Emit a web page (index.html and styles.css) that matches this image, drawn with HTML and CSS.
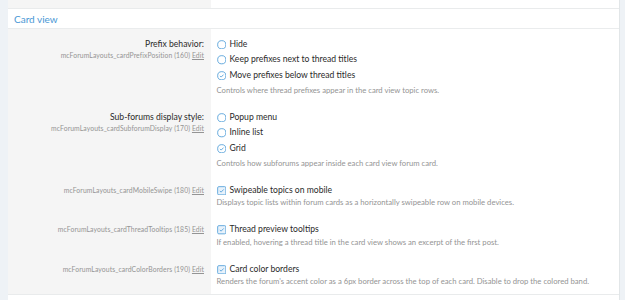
FILE: index.html
```html
<!DOCTYPE html>
<html lang="en">
<head>
  <meta charset="UTF-8" />
  <title>Options: Card view</title>
  <link rel="stylesheet" href="styles.css">
</head>
<body>

  <div class="block">

    <!-- tail of the previous group -->
    <div class="form-row prev-row">
      <div class="row-l"></div>
      <div class="row-r"></div>
    </div>

    <h3 class="block-head">Card view</h3>

    <!-- Prefix behavior -->
    <div class="form-row">
      <div class="row-l">
        <div class="label">Prefix behavior:</div>
        <div class="hint">mcForumLayouts_cardPrefixPosition (160) <span class="edit">Edit</span></div>
      </div>
      <div class="row-r">
        <ul class="choices">
          <li>
            <svg class="ico" viewBox="0 0 10 10"><circle cx="5" cy="5" r="4.3" fill="#fff" stroke="#4f9dd8" stroke-width="0.9"/></svg>
            Hide
          </li>
          <li>
            <svg class="ico" viewBox="0 0 10 10"><circle cx="5" cy="5" r="4.3" fill="#fff" stroke="#4f9dd8" stroke-width="0.9"/></svg>
            Keep prefixes next to thread titles
          </li>
          <li>
            <svg class="ico" viewBox="0 0 10 10"><circle cx="5" cy="5" r="4.3" fill="#fff" stroke="#4f9dd8" stroke-width="0.9"/><path d="M3.1 5.1 L4.4 6.4 L6.9 3.8" fill="none" stroke="#4f9dd8" stroke-width="0.9"/></svg>
            Move prefixes below thread titles
          </li>
        </ul>
        <div class="explain">Controls where thread prefixes appear in the card view topic rows.</div>
      </div>
    </div>

    <!-- Sub-forums display style -->
    <div class="form-row">
      <div class="row-l">
        <div class="label">Sub-forums display style:</div>
        <div class="hint">mcForumLayouts_cardSubforumDisplay (170) <span class="edit">Edit</span></div>
      </div>
      <div class="row-r">
        <ul class="choices">
          <li>
            <svg class="ico" viewBox="0 0 10 10"><circle cx="5" cy="5" r="4.3" fill="#fff" stroke="#4f9dd8" stroke-width="0.9"/></svg>
            Popup menu
          </li>
          <li>
            <svg class="ico" viewBox="0 0 10 10"><circle cx="5" cy="5" r="4.3" fill="#fff" stroke="#4f9dd8" stroke-width="0.9"/></svg>
            Inline list
          </li>
          <li>
            <svg class="ico" viewBox="0 0 10 10"><circle cx="5" cy="5" r="4.3" fill="#fff" stroke="#4f9dd8" stroke-width="0.9"/><path d="M3.1 5.1 L4.4 6.4 L6.9 3.8" fill="none" stroke="#4f9dd8" stroke-width="0.9"/></svg>
            Grid
          </li>
        </ul>
        <div class="explain">Controls how subforums appear inside each card view forum card.</div>
      </div>
    </div>

    <!-- Mobile swipe -->
    <div class="form-row">
      <div class="row-l">
        <div class="hint hint-solo">mcForumLayouts_cardMobileSwipe (180) <span class="edit">Edit</span></div>
      </div>
      <div class="row-r">
        <div class="check">
          <svg class="ico" viewBox="0 0 10 10"><rect x="0.7" y="0.7" width="8.6" height="8.6" rx="1.2" fill="#e8f2fb" stroke="#4f9dd8" stroke-width="0.9"/><path d="M2.9 5.1 L4.3 6.5 L7.1 3.6" fill="none" stroke="#4f9dd8" stroke-width="0.9"/></svg>
          Swipeable topics on mobile
        </div>
        <div class="explain">Displays topic lists within forum cards as a horizontally swipeable row on mobile devices.</div>
      </div>
    </div>

    <!-- Thread tooltips -->
    <div class="form-row">
      <div class="row-l">
        <div class="hint hint-solo">mcForumLayouts_cardThreadTooltips (185) <span class="edit">Edit</span></div>
      </div>
      <div class="row-r">
        <div class="check">
          <svg class="ico" viewBox="0 0 10 10"><rect x="0.7" y="0.7" width="8.6" height="8.6" rx="1.2" fill="#e8f2fb" stroke="#4f9dd8" stroke-width="0.9"/><path d="M2.9 5.1 L4.3 6.5 L7.1 3.6" fill="none" stroke="#4f9dd8" stroke-width="0.9"/></svg>
          Thread preview tooltips
        </div>
        <div class="explain">If enabled, hovering a thread title in the card view shows an excerpt of the first post.</div>
      </div>
    </div>

    <!-- Color borders -->
    <div class="form-row">
      <div class="row-l">
        <div class="hint hint-solo">mcForumLayouts_cardColorBorders (190) <span class="edit">Edit</span></div>
      </div>
      <div class="row-r">
        <div class="check">
          <svg class="ico" viewBox="0 0 10 10"><rect x="0.7" y="0.7" width="8.6" height="8.6" rx="1.2" fill="#e8f2fb" stroke="#4f9dd8" stroke-width="0.9"/><path d="M2.9 5.1 L4.3 6.5 L7.1 3.6" fill="none" stroke="#4f9dd8" stroke-width="0.9"/></svg>
          Card color borders
        </div>
        <div class="explain">Renders the forum's accent color as a 6px border across the top of each card. Disable to drop the colored band.</div>
      </div>
    </div>

    <div class="block-foot"></div>
  </div>

</body>
</html>
```

FILE: styles.css
```css
body {
  margin: 0;
  background: #eef2f6;
  color: #2a2a2a;
  font-family: Lato, "Noto Sans", sans-serif;
  overflow: hidden;
}

.block {
  margin-left: 8px;
  width: 611px;
  background: #fff;
  border-right: 1px solid #e2e6e8;
}

.form-row {
  display: grid;
  grid-template-columns: 203px 1fr;
}

.row-l {
  background: #f5f5f5;
  text-align: right;
  padding: 7.75px 7px 7.75px 0;
}

.row-r {
  padding: 7.75px 0 7.75px 5.5px;
}

.prev-row .row-l,
.prev-row .row-r {
  height: 8px;
  padding: 0;
}

.prev-row {
  border-bottom: 1px solid #e9ebec;
}

.block-head {
  margin: 0;
  height: 19px;
  line-height: 20px;
  padding-left: 6px;
  font-size: 10px;
  font-weight: normal;
  color: #4a98d5;
  border-bottom: 1px solid #eaeced;
}

.label {
  font-size: 8.6px;
  line-height: 15.5px;
}

.hint {
  font-size: 6.8px;
  letter-spacing: 0.1px;
  line-height: 10px;
  margin-top: -2px;
  color: #949494;
}

.hint-solo {
  line-height: 15.5px;
  margin-top: 0;
}

.edit {
  text-decoration: underline;
}

.choices {
  list-style: none;
  margin: 0 0 2.5px;
  padding: 0;
}

.choices li,
.check {
  display: flex;
  align-items: center;
  font-size: 8.6px;
  line-height: 15.5px;
  height: 15.5px;
}

.ico {
  width: 9.5px;
  height: 9.5px;
  margin-right: 3.5px;
  flex: none;
}

.explain {
  font-size: 7.7px;
  line-height: 8.5px;
  color: #949494;
}

.block-foot {
  height: 10px;
  border-top: 1px solid #e9ebec;
  background: #fff;
}
```
